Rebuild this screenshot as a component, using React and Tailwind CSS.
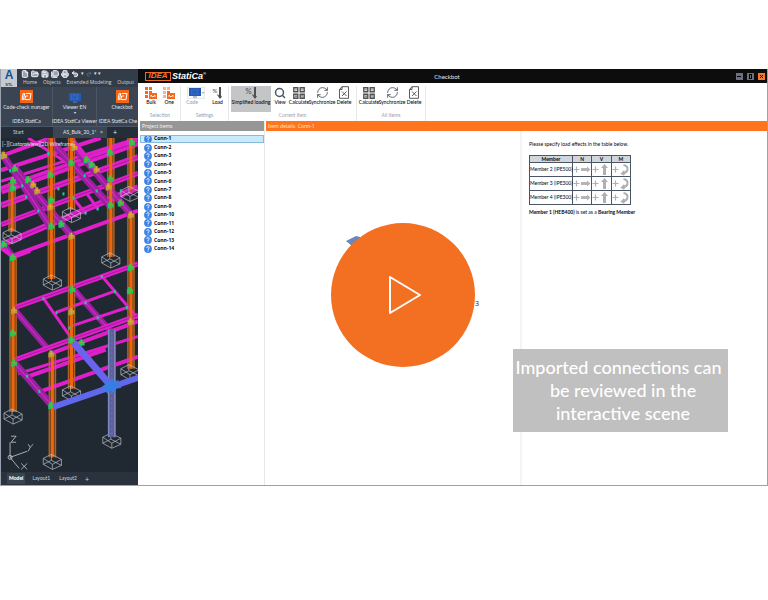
import React, { useState } from 'react';
import { File, FolderOpen, Save, SaveAll, Printer, Undo2, Redo2, Search, RefreshCw } from 'lucide-react';

const connections = Array.from({ length: 14 }, (_, i) => `Conn-${i + 1}`);
const members = ['Member 2 (IPE500)', 'Member 3 (IPE300)', 'Member 4 (IPE300)'];

// [x1, y1, x2, y2, width]
const beams = [
  [1, 156, 50, 138, 4], [1, 170, 100, 138, 4], [1, 190, 137, 142, 8], [1, 181, 137, 138, 3], [1, 205, 137, 157, 6],
  [1, 224, 137, 173, 5], [4, 243, 137, 187, 6], [12, 255, 137, 210, 4], [28, 138, 75, 168, 3],
  [1, 152, 50, 226, 7], [14, 167, 72, 236, 7], [1, 240, 13, 256, 6], [48, 138, 110, 206, 7],
  [72, 145, 130, 214, 7], [70, 138, 96, 170, 5], [73, 198, 85, 213, 3], [86, 193, 97, 208, 3],
  [1, 247, 13, 256, 4], [14, 256, 30, 250, 4], [13, 307, 137, 263, 5], [14, 308, 48, 348, 6], [43, 297, 71, 337, 3],
  [72, 287, 110, 330, 6], [101, 275, 137, 317, 3], [56, 311, 114, 290, 3], [70, 325, 127, 306, 3],
  [13, 359, 137, 314, 5], [50, 352, 137, 320, 4], [18, 372, 137, 335, 3], [27, 375, 105, 348, 4],
  [39, 390, 137, 355, 4], [14, 361, 52, 404, 7],
];

// [x, top, bottom]
const columns = [
  [12, 182, 231], [51, 138, 278], [71, 138, 209], [110, 138, 256], [130, 138, 190],
  [13, 256, 410], [71, 235, 387], [130, 213, 367], [52, 352, 455],
];

const footings = [[12, 234], [71, 213], [129, 192], [52, 280], [110, 258], [13, 413], [71, 390], [129, 369], [52, 458], [111, 437]];

const joints = [
  [4, 155], [15, 168], [28, 179], [37, 190], [13, 180], [13, 187], [33, 184], [50, 174], [71, 162], [74, 147],
  [86, 159], [91, 164], [96, 169], [109, 152], [110, 178], [108, 186], [131, 142], [51, 199], [50, 206], [51, 225],
  [61, 223], [71, 235], [110, 204], [120, 202], [130, 214], [13, 256], [72, 288], [71, 310], [130, 266], [129, 289],
  [14, 309], [13, 331], [14, 361], [51, 352], [71, 338], [81, 341], [130, 320], [51, 403], [4, 243],
];

const dots = [
  [10, 170], [27, 144], [22, 185], [26, 196], [38, 210], [48, 153], [58, 188], [63, 193], [84, 175], [96, 190],
  [73, 197], [85, 212], [97, 208], [120, 190], [43, 297], [56, 311], [85, 301], [101, 275], [97, 316], [114, 290], [126, 306], [27, 374], [39, 389], [69, 326],
];

const Wireframe = () => (
  <svg viewBox="1 138 136 334" preserveAspectRatio="xMinYMin slice" className="block h-[334px] w-full" role="img" aria-label="Steel structure">
    <rect x="1" y="138" width="137" height="334" fill="#202832" />
    {columns.map(([x, top, bottom], i) => (
      <g key={i}>
        <path d={`M${x} ${top}V${bottom}`} stroke="#6b4220" strokeWidth="8" />
        <path d={`M${x - 3} ${top}V${bottom}M${x + 3} ${top}V${bottom}`} stroke="#b8752a" strokeWidth=".6" />
      </g>
    ))}
    {beams.map(([x1, y1, x2, y2, w], i) => (
      <g key={i}>
        <path d={`M${x1} ${y1}L${x2} ${y2}`} stroke={x2 - x1 < 75 && w > 5 ? '#9a209f' : '#e01fcb'} strokeWidth={w} />
        {w > 4 && <path d={`M${x1} ${y1}L${x2} ${y2}`} stroke={x2 - x1 < 75 ? '#d626cc' : '#a51a9c'} strokeWidth="1" />}
      </g>
    ))}
    {columns.map(([x, top, bottom], i) => (
      <g key={i}>
        <path d={`M${x} ${top}V${bottom}`} stroke="#f0650c" strokeWidth="3" />
        <path d={`M${x - 3} ${top}V${bottom}M${x + 3} ${top}V${bottom}`} stroke="#b8752a" strokeWidth=".5" />
      </g>
    ))}
    {footings.map(([x, y], i) => (
      <path
        key={i}
        transform={`translate(${x} ${y})`}
        d="M-9-2L-1-6L9-1L0 4ZM-9-2V4L0 9V4M0 9L9 5V-1M-1-6V0L-9 4M-1 0L9 5"
        fill="none"
        stroke="#b9bdc2"
        strokeWidth=".7"
      />
    ))}
    {joints.map(([x, y], i) => (
      <g key={i} transform={`translate(${x} ${y})`}>
        <path d="M-2-3H1V-1H3V3H0V4H-3V-1H-2Z" fill={i % 3 ? '#18c956' : '#b79b35'} />
        <path d="M-2 0H2M0-3V3" stroke={i % 3 ? '#7fae3b' : '#f2a231'} strokeWidth=".9" />
      </g>
    ))}
    {dots.map(([x, y], i) => <rect key={i} x={x - 1} y={y - 1} width="2" height="3" fill="#20c99b" />)}
    <path d="M111 328V435" stroke="#596296" strokeWidth="8" />
    <path d="M108 328V435M114 328V435" stroke="#8b96d3" strokeWidth="1" />
    <path d="M111 330V435" stroke="#a05aa5" strokeWidth="1" strokeDasharray="3 2" />
    <path d="M73 341L110 384" stroke="#6b63ee" strokeWidth="7" />
    <path d="M53 405L137 376" stroke="#6962ed" strokeWidth="6" />
    <path d="M53 405L137 376" stroke="#5371e7" strokeWidth="2" />
    <path d="M111 375L113 380L118 378L116 383L121 386L115 387L114 392L110 389L106 392L105 387L100 386L105 382L103 377L109 380Z" fill="#397ce5" />
    <g fill="none" stroke="#c8ccd1" strokeWidth=".8">
      <path d="M10 440V455L27 449M10 455L19 466M11 434H16L11 440H16M28 442L30 445L33 442M30 445L28 449M21 461L27 467M27 461L21 467" />
      <circle cx="10" cy="455" r="2" />
    </g>
    <text x="2" y="146" fill="#e0e0e4" fontSize="5" fontFamily="Lato, sans-serif">[−][Custom View][2D Wireframe]</text>
  </svg>
);

const OrangeTile = () => (
  <svg viewBox="0 0 13 13" className="h-[13px] w-[13px]">
    <rect width="13" height="13" fill="#f3671a" />
    <path d="M3.200 3.500H4.700L3.500 9.500H2ZM6 3.500H11L10 9.500H4.800L5.600 6H8" fill="none" stroke="#fff" />
  </svg>
);

const Monitor = ({ className }) => (
  <svg viewBox="0 0 14 10" className={className}>
    <rect x="1" width="12" height="8" fill="#2459b5" />
    <path d="M3 2H11M3 4H6M8 4H11M3 6H11" stroke="#4d82dc" strokeWidth=".8" strokeDasharray="1 .5" />
    <path d="M5 9H9" stroke="#6583ad" />
  </svg>
);

const SelectIcon = ({ one }) => (
  <svg viewBox="0 0 12 12" className="h-3 w-3">
    <path d="M0 0H3V3H0ZM4 0H7V3H4ZM0 4H3V7H0ZM0 8H3V11H0Z" fill={one ? '#f5b593' : '#f26a21'} />
    <path d="M4 4H7V6H12V12H4Z" fill="#f26a21" />
    <path d="M6 10V8L8 10L10 8V10" stroke="#fff" fill="none" strokeWidth=".8" />
  </svg>
);

const LoadIcon = ({ big }) => (
  <span className={`flex h-3 items-start leading-[8px] text-gray-600 ${big ? 'text-[8px]' : 'text-[6px]'}`}>
    %
    <svg viewBox="0 0 5 12" className="h-3 w-[5px]" fill="none" stroke="#505050">
      <path d="M3 0V11" strokeWidth="2" />
      <path d="M.5 7.500L3 11L4.500 9" strokeWidth="1.200" />
    </svg>
  </span>
);

const CalculateIcon = () => (
  <svg viewBox="0 0 12 12" className="h-3 w-3" fill="none" stroke="#505050">
    <path d="M.8.8H4.8V4.8H.8ZM7.2.8H11.2V4.8H7.2ZM.8 7.2H4.8V11.2H.8ZM7.2 7.2H11.2V11.2H7.2Z" strokeWidth="1.400" />
    <path d="M2 2.8H4M8.2 2.8H10.2M2 9.2H4M3 8.2V10.2M8.2 8.6H10.2M8.2 9.9H10.2" strokeWidth=".7" />
  </svg>
);

const DeleteIcon = () => (
  <svg viewBox="0 0 12 13" className="h-[13px] w-3" fill="none" stroke="#4a4a4a" strokeWidth=".9">
    <path d="M4 .7H10.5V12.3H1.5V3.5ZM4 .7V3.5H1.5M4 5.5L8.5 10M8.5 5.5L4 10" />
  </svg>
);

const Tool = ({ icon, label, className = '', disabled }) => (
  <button
    disabled={disabled}
    className={`flex h-[26px] flex-col items-center text-[5px] leading-[7px] font-medium whitespace-nowrap ${disabled ? 'text-gray-400' : 'text-gray-950'} ${className}`}
  >
    <span className="flex h-[13px] items-center justify-center">{icon}</span>
    {label}
  </button>
);

const Group = ({ label, children, className = '' }) => (
  <div className={`flex flex-col border-r border-gray-200 px-0.5 ${className}`}>
    <div className="flex">{children}</div>
    <div className="text-center text-[5px] leading-[7px] text-gray-400">{label}</div>
  </div>
);

const ItemTools = () => (
  <>
    <Tool icon={<CalculateIcon />} label="Calculate" className="w-5" />
    <Tool icon={<RefreshCw className="h-[13px] w-[13px] text-gray-600" strokeWidth={1.6} />} label="Synchronize" className="w-[26px]" />
    <Tool icon={<DeleteIcon />} label="Delete" className="w-[18px]" />
  </>
);

const CadPanel = () => (
  <section className="flex w-[137px] shrink-0 flex-col overflow-hidden bg-[#262e39] text-[5px] text-gray-200">
    <div className="flex h-[18px] bg-[#333c49]">
      <button className="flex h-[18px] w-4 flex-col items-center bg-[#c6cbd1] font-['Liberation_Sans',sans-serif] text-[12px] leading-[13px] font-bold text-[#174f92]">
        A<span className="text-[4px] leading-[5px] text-gray-700">STL</span>
      </button>
      <div className="flex-1">
        <div className="flex h-[9px] items-center gap-[2px] pl-1">
          {[File, FolderOpen, Save, SaveAll, Printer, Undo2].map((Icon, i) => (
            <Icon key={i} className="h-2 w-2 fill-gray-400 text-gray-100" strokeWidth={3} />
          ))}
          <span>▾</span>
          <Redo2 className="h-1.5 w-1.5 text-gray-500" strokeWidth={3} />
          <span>▾ ▾</span>
        </div>
        <nav className="flex h-[9px] items-center justify-between pr-1 pl-1.5 whitespace-nowrap text-gray-300">
          <button>Home</button>
          <button>Objects</button>
          <button>Extended Modeling</button>
          <button>Output</button>
        </nav>
      </div>
    </div>
    <div className="flex h-10 border-b border-gray-600 bg-[#3a4452] font-[Lato,sans-serif] whitespace-nowrap">
      <div className="flex w-[52px] shrink-0 flex-col items-center border-r border-gray-600 pt-[3px]">
        <OrangeTile />
        <button className="mt-px leading-[7px]">Code-check manager</button>
        <span className="mt-auto leading-[9px]">IDEA StatiCa</span>
      </div>
      <div className="flex w-[44px] shrink-0 flex-col items-center border-r border-gray-600 pt-[6px]">
        <Monitor className="h-[10px] w-3.5" />
        <button className="mt-px leading-[7px]">Viewer EN</button>
        <span className="text-[4px] leading-[4px]">▾</span>
        <span className="mt-auto leading-[9px]">IDEA StatiCa Viewer</span>
      </div>
      <div className="flex flex-1 flex-col items-center overflow-hidden pt-[3px] pl-px">
        <div className="ml-2 flex flex-col items-center">
          <OrangeTile />
          <button className="mt-px leading-[7px]">Checkbot</button>
        </div>
        <span className="mt-auto leading-[9px]">IDEA StatiCa Che</span>
      </div>
    </div>
    <div className="flex h-[11px] shrink-0 items-center bg-[#252d38] font-[Lato,sans-serif]">
      <button className="w-[52px] pl-3 text-left text-gray-300">Start</button>
      <button className="flex h-full w-[54px] items-center justify-between bg-[#3b4553] pr-1 pl-2.5">AS_Bulk_20_1* <span>×</span></button>
      <button className="w-4 text-[7px]">+</button>
    </div>
    <Wireframe />
    <div className="flex h-[13px] items-center gap-1 bg-[#29323d] pl-1.5 font-[Lato,sans-serif] text-gray-300">
      <button className="h-[11px] bg-[#3a444f] px-0.5 font-black text-white">Model</button>
      <button className="px-[3px]">Layout1</button>
      <button className="px-0.5">Layout2</button>
      <button className="px-0.5 text-[7px] leading-[8px]">+</button>
    </div>
  </section>
);

const TitleBar = () => (
  <header className="flex h-3.5 items-center justify-between bg-[#0d0d0d] pr-0.5 pl-[7px] text-white">
    <div className="flex w-20 items-center font-['Liberation_Sans',sans-serif] text-[9px] leading-[10px] font-bold italic">
      <span className="flex h-[9px] w-[26px] items-center justify-center border border-[#ed6a22] text-[8px] text-[#f47425]">IDEA</span>
      <span className="pl-px">StatiCa<span className="align-top text-[4px] leading-[5px]">®</span></span>
    </div>
    <h1 className="pr-4 font-[Lato,sans-serif] text-[6px] text-gray-200">Checkbot</h1>
    <div className="flex w-20 justify-end gap-1">
      <button aria-label="Minimize" className="flex h-[7px] w-[7px] items-center justify-center bg-gray-500"><span className="h-px w-1 bg-black" /></button>
      <button aria-label="Maximize" className="flex h-[7px] w-[7px] items-center justify-center bg-gray-500"><span className="h-[5px] w-[3px] border border-black" /></button>
      <button aria-label="Close" className="flex h-[7px] w-[7px] items-center justify-center bg-[#f27a32]">
        <svg viewBox="0 0 5 5" className="h-[5px] w-[5px]"><path d="M1 1L4 4M4 1L1 4" stroke="#111" /></svg>
      </button>
    </div>
  </header>
);

const Ribbon = () => (
  <div className="flex h-[38px] bg-white pt-[3px] pl-0.5 font-[Lato,sans-serif]">
    <Group label="Selection" className="w-[41px]">
      <Tool icon={<SelectIcon />} label="Bulk" className="w-[19px]" />
      <Tool icon={<SelectIcon one />} label="One" className="w-[18px]" />
    </Group>
    <Group label="Settings" className="w-12">
      <Tool
        disabled
        label={<span className="mr-2">Code</span>}
        icon={<span className="flex items-center border border-gray-200 bg-gray-50"><Monitor className="h-[10px] w-3.5" /><span className="text-[4px]">▾</span></span>}
        className="w-[26px]"
      />
      <Tool icon={<LoadIcon />} label="Load" className="w-[17px]" />
    </Group>
    <Group label="Current item" className="w-[128px]">
      <Tool icon={<LoadIcon big />} label="Simplified loading" className="w-10 bg-[#c4c5c7]" />
      <Tool icon={<Search className="h-3 w-3 text-gray-600" strokeWidth={3} />} label="View" className="w-[18px]" />
      <ItemTools />
    </Group>
    <Group label="All items" className="w-[69px]">
      <ItemTools />
    </Group>
  </div>
);

const ForceCell = ({ kind }) => (
  <td className="border border-gray-600 p-0">
    <svg viewBox="0 0 19 13" className="mx-auto h-[13px] w-[19px]" fill="none" stroke="#b0b0b0">
      <path d="M.5 6.500H6.500M3.500 3.500V9.500" strokeWidth="1.200" />
      {kind === 'N' && <path d="M8 5H14V3.500L17.500 6.500L14 9.500V8H8Z" fill="#b5b5b5" stroke="none" />}
      {kind === 'V' && <path d="M11 12V5H9L12.500 1L16 5H14V12Z" fill="#b0b0b0" stroke="none" />}
      {kind === 'M' && <path d="M11.500 2Q16 3 15.500 6.500Q15 9.500 11 10.500M12.500 8L10 10.500L12.500 12" strokeWidth="2" />}
    </svg>
  </td>
);

const LoadTable = () => (
  <aside className="flex-1 border-l-2 border-gray-100 pt-[10px] pl-[7px] font-[Lato,sans-serif] text-[5px] leading-[7px] text-gray-950">
    <p>Please specify load effects in the table below.</p>
    <table className="mt-[7px] w-[102px] table-fixed border-collapse border border-gray-600">
      <thead>
        <tr className="h-1.5 bg-gray-300 leading-[6px]">
          <th className="w-[43px] border border-gray-600 p-0">Member</th>
          <th className="border border-gray-600 p-0">N</th>
          <th className="border border-gray-600 p-0">V</th>
          <th className="border border-gray-600 p-0">M</th>
        </tr>
      </thead>
      <tbody>
        {members.map((member) => (
          <tr key={member}>
            <td className="border border-gray-600 p-0 text-center whitespace-nowrap">{member}</td>
            <ForceCell kind="N" />
            <ForceCell kind="V" />
            <ForceCell kind="M" />
          </tr>
        ))}
      </tbody>
    </table>
    <p className="mt-1"><b>Member 1 (HEB400)</b> is set as a <b>Bearing Member</b></p>
  </aside>
);

const App = () => {
  const [selected, setSelected] = useState('Conn-1');

  return (
    <div className="min-h-screen bg-white pt-[69px] font-['Open_Sans',sans-serif]">
      <main className="relative flex border border-t-0 border-gray-400">
        <CadPanel />
        <section className="flex min-w-0 flex-1 flex-col bg-white">
          <TitleBar />
          <Ribbon />
          <div className="flex flex-1">
            <div className="flex w-[127px] shrink-0 flex-col border-r border-gray-200 pl-0.5">
              <h2 className="h-[10px] bg-[#969696] pl-0.5 text-[5px] leading-[10px] text-white">Project items</h2>
              <ul className="mt-[4px] grid h-[118px] auto-rows-fr text-[5px] font-bold text-gray-950">
                {connections.map((name) => (
                  <li key={name} className="flex">
                    <button
                      onClick={() => setSelected(name)}
                      className={`flex w-full items-center gap-0.5 pl-1 ${selected === name ? 'bg-[#c8eafa] outline outline-[#85bbdc] -outline-offset-1' : ''}`}
                    >
                      <svg viewBox="0 0 8 8" className="h-2 w-2">
                        <circle cx="4" cy="4" r="3.900" fill="#3b83e6" />
                        <path d="M2.700 3Q3 1.500 4.300 1.700Q6 2.300 4.800 3.600Q4 4 4 5M4 5.700V6.600" fill="none" stroke="#fff" strokeWidth=".9" />
                      </svg>
                      {name}
                    </button>
                  </li>
                ))}
              </ul>
            </div>
            <div className="flex min-w-0 flex-1 flex-col pl-px">
              <h2 className="h-[10px] bg-[#ff751d] pl-0.5 text-[5px] leading-[10px] text-orange-100">Item details&nbsp; Conn-1</h2>
              <div className="flex flex-1">
                <div className="w-[254px] shrink-0" />
                <LoadTable />
              </div>
            </div>
          </div>
        </section>

        {/* scene remnants behind the play button */}
        <svg viewBox="0 0 16 12" className="absolute top-[166px] left-[345px] h-3 w-4">
          <path d="M0 6L10 1L14 2V8L6 11Z" fill="#6789bd" />
        </svg>
        <span className="absolute top-[231px] left-[474px] text-[7px] leading-[8px] text-gray-900">3</span>
        <button aria-label="Play video" className="absolute top-[154px] left-[330px] flex h-36 w-36 items-center justify-center rounded-full bg-[#f36f21] pl-1">
          <svg viewBox="0 0 34 40" className="h-10 w-[34px]" fill="none" stroke="#fff" strokeWidth="2" strokeLinejoin="round">
            <path d="M2 2V38L32 20Z" />
          </svg>
        </button>
        <p className="absolute right-[39px] bottom-[53px] w-[215px] bg-[#c0c0c0] py-[7px] pr-1 text-center font-[Lato,sans-serif] text-[18px] leading-[23px] font-medium whitespace-nowrap text-white">
          Imported connections can<br />&nbsp; be reviewed in the<br />&nbsp; interactive scene
        </p>
      </main>
    </div>
  );
};

export default App;
